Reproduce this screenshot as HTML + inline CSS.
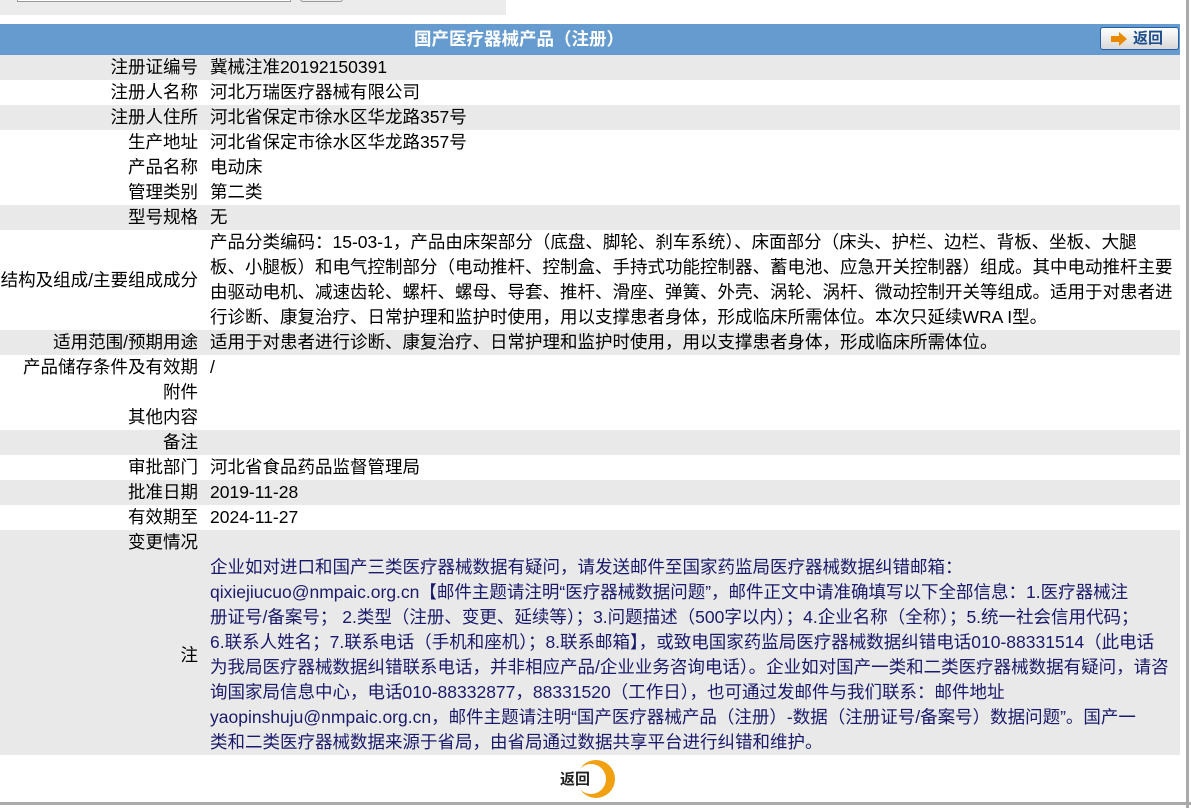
<!DOCTYPE html>
<html><head><meta charset="utf-8"><style>
*{margin:0;padding:0;box-sizing:border-box}
body{width:1191px;height:808px;background:#fff;position:relative;overflow:hidden;font-family:"Liberation Sans","Noto Sans CJK SC",sans-serif;font-size:17.5px;color:#000}
.topbox{position:absolute;left:0;top:0;width:506px;height:15px;background:#ececec}
.inp{position:absolute;left:17px;top:-4px;width:274px;height:6px;border:1px solid #999;background:#fff;border-top:none}
.btn{position:absolute;left:300px;top:-4px;width:43px;height:6px;border:1px solid #999;border-radius:3px;background:#eee;border-top:none}
.hdr{position:absolute;left:0;top:24px;width:1180px;height:31px;background:#669bcf;color:#fff;font-weight:bold;line-height:31px;font-size:17.5px}
.ttl{position:absolute;left:414px;top:0;white-space:nowrap}
.back{position:absolute;left:1100px;top:3px;width:79px;height:23px;border:1px solid #2a5f9e;border-radius:3px;background:linear-gradient(#fff,#d8d8d8);font-weight:bold;color:#1d4f8e;font-size:15px;line-height:21px}
.tbl{position:absolute;left:0;top:55px;width:1180px}
.r{display:flex;line-height:25px;white-space:nowrap}
.g{background:#e9e9e9}
.l{width:198px;text-align:right;flex:none}
.v{padding-left:12px}
.note{color:#1a1a6a}
.vl{position:absolute;left:1186px;top:0;width:3px;height:808px;background:#aaa}
.hl{position:absolute;left:0;top:802px;width:1191px;height:3px;background:#aaa}
</style></head><body>
<div class="topbox"><div class="inp"></div><div class="btn"></div></div>
<div class="hdr"><span class="ttl">国产医疗器械产品（注册）</span>
<div class="back"><svg style="position:absolute;left:10px;top:4px" width="16" height="14"><path d="M0 4h8V0l8 7-8 7v-4H0z" fill="#e88a00"/></svg><span style="position:absolute;left:32px;top:0">返回</span></div></div>
<div class="tbl">
<div class="r g"><div class="l">注册证编号</div><div class="v">冀械注准20192150391</div></div>
<div class="r"><div class="l">注册人名称</div><div class="v">河北万瑞医疗器械有限公司</div></div>
<div class="r g"><div class="l">注册人住所</div><div class="v">河北省保定市徐水区华龙路357号</div></div>
<div class="r"><div class="l">生产地址</div><div class="v">河北省保定市徐水区华龙路357号</div></div>
<div class="r"><div class="l">产品名称</div><div class="v">电动床</div></div>
<div class="r"><div class="l">管理类别</div><div class="v">第二类</div></div>
<div class="r g"><div class="l">型号规格</div><div class="v">无</div></div>
<div class="r" style="align-items:center"><div class="l" style="direction:rtl"><span style="direction:ltr;unicode-bidi:embed">结构及组成/主要组成成分</span></div><div class="v">产品分类编码：15-03-1，产品由床架部分（底盘、脚轮、刹车系统）、床面部分（床头、护栏、边栏、背板、坐板、大腿<br>板、小腿板）和电气控制部分（电动推杆、控制盒、手持式功能控制器、蓄电池、应急开关控制器）组成。其中电动推杆主要<br>由驱动电机、减速齿轮、螺杆、螺母、导套、推杆、滑座、弹簧、外壳、涡轮、涡杆、微动控制开关等组成。适用于对患者进<br>行诊断、康复治疗、日常护理和监护时使用，用以支撑患者身体，形成临床所需体位。本次只延续WRA I型。</div></div>
<div class="r g"><div class="l">适用范围/预期用途</div><div class="v">适用于对患者进行诊断、康复治疗、日常护理和监护时使用，用以支撑患者身体，形成临床所需体位。</div></div>
<div class="r"><div class="l">产品储存条件及有效期</div><div class="v">/</div></div>
<div class="r"><div class="l">附件</div><div class="v"></div></div>
<div class="r"><div class="l">其他内容</div><div class="v"></div></div>
<div class="r g"><div class="l">备注</div><div class="v"></div></div>
<div class="r"><div class="l">审批部门</div><div class="v">河北省食品药品监督管理局</div></div>
<div class="r g"><div class="l">批准日期</div><div class="v">2019-11-28</div></div>
<div class="r"><div class="l">有效期至</div><div class="v">2024-11-27</div></div>
<div class="g">
<div class="r"><div class="l">变更情况</div><div class="v"></div></div>
<div class="r" style="align-items:center;height:200px"><div class="l">注</div><div class="v note">企业如对进口和国产三类医疗器械数据有疑问，请发送邮件至国家药监局医疗器械数据纠错邮箱：<br>qixiejiucuo@nmpaic.org.cn【邮件主题请注明“医疗器械数据问题”，邮件正文中请准确填写以下全部信息：1.医疗器械注<br>册证号/备案号； 2.类型（注册、变更、延续等）；3.问题描述（500字以内）；4.企业名称（全称）；5.统一社会信用代码；<br>6.联系人姓名；7.联系电话（手机和座机）；8.联系邮箱】，或致电国家药监局医疗器械数据纠错电话010-88331514（此电话<br>为我局医疗器械数据纠错联系电话，并非相应产品/企业业务咨询电话）。企业如对国产一类和二类医疗器械数据有疑问，请咨<br>询国家局信息中心，电话010-88332877，88331520（工作日），也可通过发邮件与我们联系：邮件地址<br>yaopinshuju@nmpaic.org.cn，邮件主题请注明“国产医疗器械产品（注册）-数据（注册证号/备案号）数据问题”。国产一<br>类和二类医疗器械数据来源于省局，由省局通过数据共享平台进行纠错和维护。</div></div>
</div>
</div>
<svg style="position:absolute;left:572px;top:758px" width="48" height="42"><circle cx="24" cy="21" r="19" fill="#f0a010"/><circle cx="19" cy="21" r="15" fill="#fff"/></svg>
<div style="position:absolute;left:560px;top:768px;font-weight:bold;font-size:15px;color:#222">返回</div>
<div class="vl"></div><div class="hl"></div>
</body></html>
